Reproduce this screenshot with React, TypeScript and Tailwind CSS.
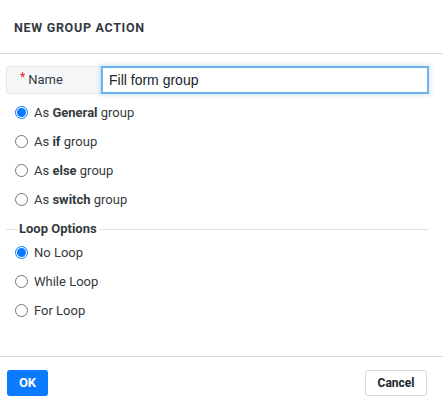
import React from "react";

function Radio({ checked, children }: { checked?: boolean; children: React.ReactNode }) {
  return (
    <div className="flex items-center h-[29px]">
      <span
        className={
          checked
            ? "w-[13px] h-[13px] rounded-full border border-[#0a7aff] bg-white flex items-center justify-center ml-[15px]"
            : "w-[13px] h-[13px] rounded-full border border-[#767676] bg-white ml-[15px]"
        }
      >
        {checked && <span className="w-[9px] h-[9px] rounded-full bg-[#0a7aff]" />}
      </span>
      <span className="ml-[6px] text-[13px] text-[#343a40]">{children}</span>
    </div>
  );
}

export default function App() {
  return (
    <div className="w-[443px] h-[409px] bg-white flex flex-col" style={{ fontFamily: "Roboto, 'Liberation Sans', sans-serif" }}>
      <div className="h-[54px] flex items-center px-[14px] pt-[4px] border-b border-[#d6dbe0]">
        <span className="text-[12.5px] font-bold tracking-[0.7px] text-[#343a40]">NEW GROUP ACTION</span>
      </div>
      <div className="flex-1 flex flex-col px-[6px] pt-[12px]">
        <div className="flex h-[28px] pr-[8px]">
          <div className="w-[95px] bg-[#f6f7f8] border border-[#e4e7ea] rounded-l-[3px] flex items-center pl-[13px] text-[13px] text-[#343a40]">
            <span className="text-[#e02020] text-[12px] mr-[3px] -mt-[6px]">*</span>Name
          </div>
          <div className="flex-1 border-2 border-[#6db3ef] shadow-[0_0_4px_2px_rgba(110,180,240,0.25)] flex items-center pl-[6px] text-[14px] text-[#212529]" style={{ fontFamily: "'Liberation Sans', Arial, sans-serif" }}>
            Fill form group
          </div>
        </div>
        <div className="mt-[4px] -ml-[6px]">
          <Radio checked>As <b>General</b> group</Radio>
          <Radio>As <b>if</b> group</Radio>
          <Radio>As <b>else</b> group</Radio>
          <Radio>As <b>switch</b> group</Radio>
        </div>
        <div className="flex items-center mt-[7px] pr-[8px] h-[16px]">
          <div className="w-[11px] h-px bg-[#dde1e5]" />
          <span className="text-[13px] font-bold text-[#343a40] px-[2px]">Loop Options</span>
          <div className="flex-1 h-px bg-[#dde1e5]" />
        </div>
        <div className="mt-[1px] -ml-[6px]">
          <Radio checked>No Loop</Radio>
          <Radio>While Loop</Radio>
          <Radio>For Loop</Radio>
        </div>
      </div>
      <div className="h-[53px] border-t border-[#d6dbe0] flex items-center justify-between pl-[7px] pr-[16px]">
        <button className="w-[41px] h-[26px] rounded-[3px] bg-[#0a7aff] text-white text-[13px] font-bold">OK</button>
        <button className="w-[62px] h-[26px] rounded-[3px] bg-white border border-[#d6dbe0] text-[#212529] text-[12px] font-bold">Cancel</button>
      </div>
    </div>
  );
}
